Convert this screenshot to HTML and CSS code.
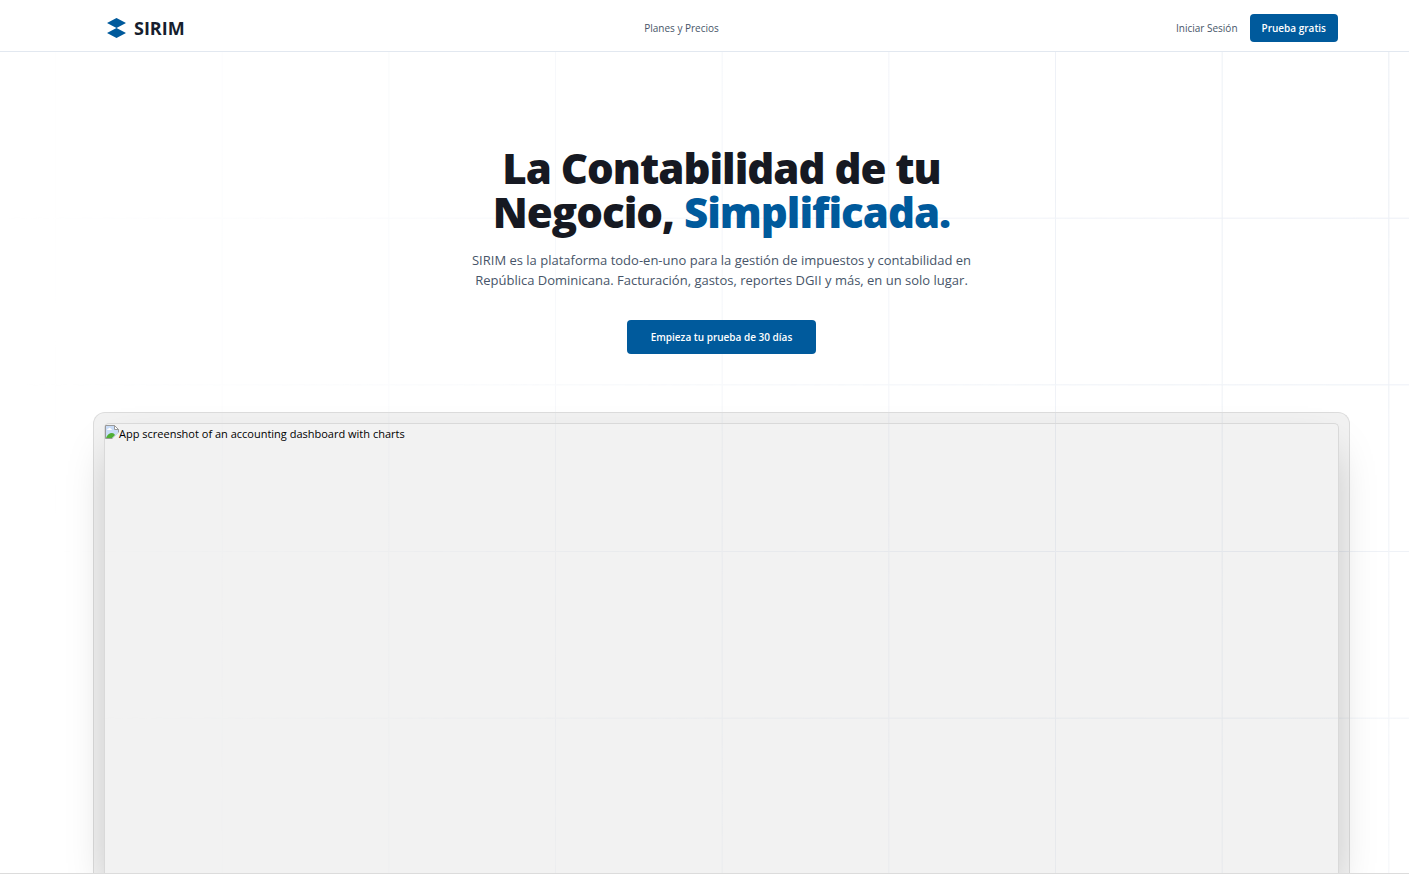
FILE: index.html
```html
<!DOCTYPE html>
<html lang="es">
<head>
<meta charset="utf-8">
<meta name="viewport" content="width=device-width, initial-scale=1">
<title>SIRIM</title>
<link rel="stylesheet" href="styles.css">
</head>
<body>
<div class="page">
  <header class="header">
    <a class="brand" href="#">
      <svg class="brand-mark" viewBox="0 0 20 20" aria-hidden="true"><path d="M9.500 0L19 5L9.500 10L0 5ZM9.500 10L19 15L9.500 20L0 15Z"/></svg>
      <span>SIRIM</span>
    </a>
    <nav class="nav"><a class="link" href="#">Planes y Precios</a></nav>
    <div class="actions">
      <a class="link" href="#">Iniciar Sesión</a>
      <button class="button" type="button">Prueba gratis</button>
    </div>
  </header>
  <main class="hero">
    <svg class="grid" aria-hidden="true">
      <defs>
        <pattern id="cells" width="200" height="200" patternUnits="userSpaceOnUse" patternTransform="translate(55 -1) scale(.83333)">
          <path d="M.5 200V.5H200" fill="none" stroke="#e2e8f0"/>
        </pattern>
        <radialGradient id="fade" cx="1" cy="0" r="1">
          <stop offset="0" stop-color="#fff"/><stop offset="1" stop-color="#fff" stop-opacity="0"/>
        </radialGradient>
        <mask id="corner"><rect width="100%" height="220%" fill="url(#fade)"/></mask>
      </defs>
      <rect width="100%" height="100%" fill="url(#cells)" mask="url(#corner)"/>
    </svg>
    <div class="intro">
      <h1 class="title">La Contabilidad de tu<br>Negocio, <span class="accent">Simplificada.</span></h1>
      <p class="lead">SIRIM es la plataforma todo-en-uno para la gestión de impuestos y contabilidad en<br>República Dominicana. Facturación, gastos, reportes DGII y más, en un solo lugar.</p>
      <button class="button button-large" type="button">Empieza tu prueba de 30 días</button>
    </div>
    <div class="frame">
      <div class="shot">
        <svg class="missing" viewBox="0 0 14 14" aria-hidden="true">
          <path d="M.5.5H9.500L13.500 4.500V8L8 13.500H.5Z" fill="#c9dcf7" stroke="#9a9a9a"/>
          <path d="M9.500.5V4.500H13.500Z" fill="#fff" stroke="#9a9a9a"/>
          <path d="M2 5Q2 3.500 3.500 3.500Q5 2 6 4Q7 4 7 5Z" fill="#fff"/>
          <path d="M1 13Q3 8 7 8Q9 8 10 10L7 13Z" fill="#4fae35"/>
          <path d="M7 14L14 7V14Z" fill="#f2f2f2"/>
        </svg><span>App screenshot of an accounting dashboard with charts</span>
      </div>
    </div>
  </main>
  <div class="next"></div>
</div>
</body>
</html>
```
FILE: styles.css
```css
* { box-sizing: border-box; }
body {
  margin: 0;
  background: #fff;
  color: #161922;
  font-family: "Open Sans", "Noto Sans", sans-serif;
}
.page {
  display: flex;
  flex-direction: column;
  min-height: 100vh;
}
.header {
  display: grid;
  grid-template-columns: 1fr auto 1fr;
  align-items: center;
  height: 52px;
  padding: 4px 71px 0 107px;
  border-bottom: 1px solid #e2e8f0;
}
.brand {
  display: flex;
  align-items: center;
  gap: 7px;
  color: #161e2e;
  font-size: 18px;
  font-weight: 700;
  text-decoration: none;
}
.brand-mark { width: 20px; height: 20px; fill: #005a9c; }
.nav { display: flex; padding-right: 82px; }
.link {
  color: #475569;
  font-size: 10px;
  font-weight: 500;
  text-decoration: none;
}
.actions {
  display: flex;
  align-items: center;
  justify-content: flex-end;
  gap: 12px;
}
.button {
  height: 28px;
  padding: 0 12px;
  border: 0;
  border-radius: 4px;
  background: #005a9c;
  color: #fff;
  font: 600 10px "Open Sans", "Noto Sans", sans-serif;
}
.button-large { height: 34px; padding: 0 24px; }
.hero {
  position: relative;
  isolation: isolate;
  display: flex;
  flex: 1;
  flex-direction: column;
  overflow: hidden;
  padding: 94px 59px 0 93px;
}
.grid {
  position: absolute;
  inset: 0;
  z-index: -1;
  width: 100%;
  height: 100%;
}
.intro { text-align: center; }
.title {
  margin: 0;
  font-size: 42px;
  font-weight: 800;
  line-height: 44px;
  letter-spacing: -1px;
}
.accent { color: #005a9c; }
.lead {
  margin: 16px 0 30px;
  color: #475569;
  font-size: 13px;
  line-height: 20px;
}
.frame {
  display: flex;
  flex: 1;
  margin-top: 58px;
  padding: 10px 10px 0;
  border: 1px solid #dcdcdc;
  border-bottom: 0;
  border-radius: 12px 12px 0 0;
  background: rgba(0, 0, 0, .05);
}
.shot {
  display: flex;
  flex: 1;
  align-items: flex-start;
  min-height: 440px;
  padding: 1px 0;
  border: 1px solid #d9d9d9;
  border-bottom: 0;
  border-radius: 5px 5px 0 0;
  box-shadow: 0 21px 42px -10px rgba(0, 0, 0, .25);
  color: #000;
  font-size: 11px;
  line-height: 18px;
}
.missing { width: 14px; height: 14px; }
.next { height: 3px; border-top: 1px solid #dcdcdc; }
```
